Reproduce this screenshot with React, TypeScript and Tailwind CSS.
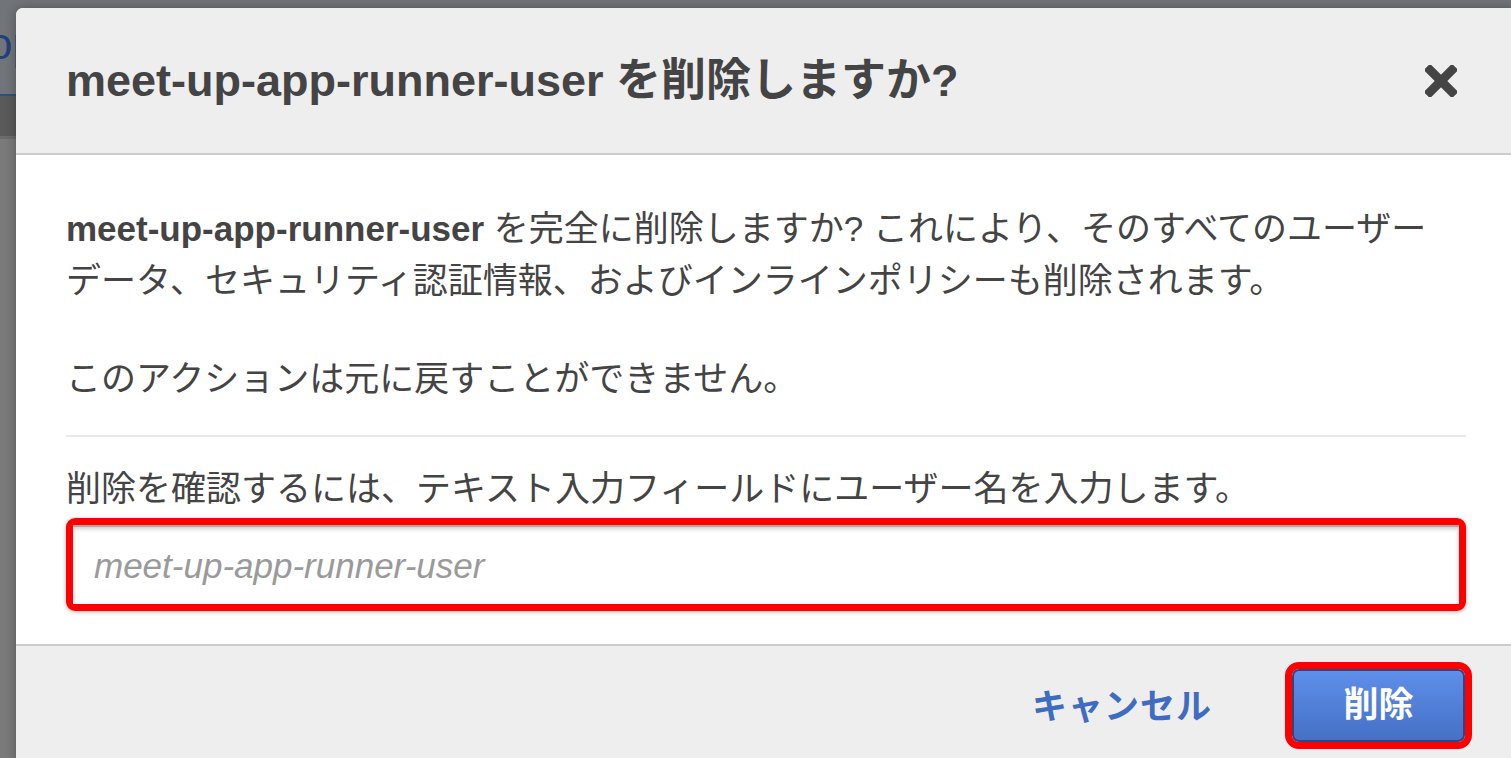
import React, { useState } from "react";

const FONT = "font-['Liberation_Sans','Noto_Sans_CJK_JP',sans-serif]";

const CloseIcon = () => (
  <svg width="32" height="32" viewBox="0 0 32 32" className="block">
    <rect x="-4" y="11.5" width="40" height="9" rx="2.5" fill="#444" transform="rotate(45 16 16)" />
    <rect x="-4" y="11.5" width="40" height="9" rx="2.5" fill="#444" transform="rotate(-45 16 16)" />
  </svg>
);

const DeleteUserModal = () => {
  const [userName, setUserName] = useState("");

  return (
    <div className="absolute left-[16px] top-[8px] w-[1500px] rounded-tl-[7px] overflow-hidden bg-white shadow-[0_0_12px_rgba(0,0,0,0.3)]">
      {/* ------------------------ header ------------------------- */}
      <div className="flex h-[147px] items-center justify-between border-b-2 border-[#cccccc] bg-[#eeeeee] pl-[50px] pr-[59px]">
        <h2 className="text-[45px] font-bold leading-none text-[#444444]">
          meet-up-app-runner-user を削除しますか?
        </h2>
        <button type="button" className="mt-[1px]">
          <CloseIcon />
        </button>
      </div>

      {/* ------------------------ body ------------------------- */}
      <div className="px-[50px] pb-[33px] pt-[48px] text-[35px] leading-[52px] text-[#444444]">
        <p>
          <span className="font-bold">meet-up-app-runner-user</span> を完全に削除しますか? これにより、そのすべてのユーザー
          <br />
          データ、セキュリティ認証情報、およびインラインポリシーも削除されます。
        </p>
        <p className="mt-[46px]">このアクションは元に戻すことができません。</p>
        <div className="mt-[30px] h-[2px] bg-[#e9e9e9]" />
        <p className="mt-[26px]">削除を確認するには、テキスト入力フィールドにユーザー名を入力します。</p>
        <div className="mt-[3px] rounded-[9px] border-[7px] border-[#ff0000] shadow-[0_1px_4px_rgba(0,0,0,0.3)]">
          <input
            type="text"
            value={userName}
            onChange={(e) => setUserName(e.target.value)}
            placeholder="meet-up-app-runner-user"
            className={`block h-[79px] w-full border-t-2 border-[#a9a9a9] bg-white px-[21px] text-[35px] text-[#444444] shadow-[inset_0_2px_4px_rgba(0,0,0,0.2)] outline-none placeholder:italic placeholder:text-[#9a9a9a] ${FONT}`}
          />
        </div>
      </div>

      {/* ------------------------ footer ------------------------- */}
      <div className="flex h-[120px] items-start justify-end gap-[80px] border-t-2 border-[#cccccc] bg-[#eeeeee] pr-[51px] pt-[23px]">
        <button type="button" className="mt-[12px] text-[35px] font-bold leading-[52px] tracking-[1px] text-[#3f6cc1]">
          キャンセル
        </button>
        <button
          type="button"
          className="h-[73px] w-[173px] rounded-[7px] border-2 border-[#2c4684] bg-gradient-to-b from-[#5e8fea] to-[#4570c6] text-[35px] font-bold text-white outline outline-[7px] outline-[#ff0000] outline-offset-[0px]"
        >
          削除
        </button>
      </div>
    </div>
  );
};

export default function App() {
  return (
    <div className={`relative h-[758px] w-[1511px] overflow-hidden bg-[#7a7a7a] ${FONT}`}>
      <div className="h-[94px] bg-[#717579] pt-[22px]">
        <span className="ml-[-12px] text-[44px] leading-none text-[#22407e]">op</span>
      </div>
      <div className="h-[2px] bg-[#2d4d8c]" />
      <div className="h-[40px] bg-[#5a5a5a]" />
      <div className="h-[3px] bg-[#6c6c6c]" />
      <DeleteUserModal />
    </div>
  );
}
